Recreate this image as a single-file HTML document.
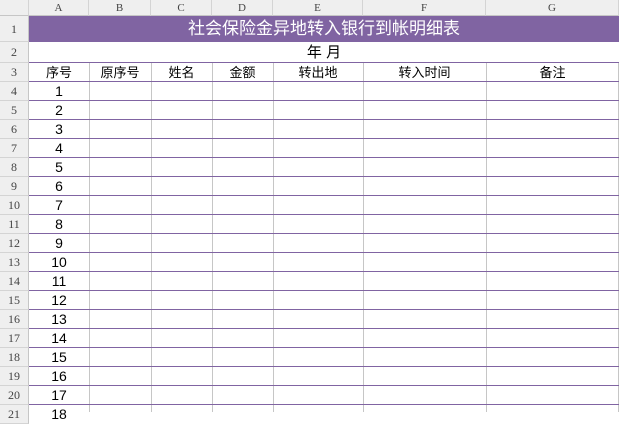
<!DOCTYPE html>
<html><head><meta charset="utf-8"><style>
*{margin:0;padding:0;box-sizing:border-box}
body{width:619px;height:412px;overflow:hidden;background:#fff;position:relative;font-family:"Liberation Sans","Noto Sans CJK SC",sans-serif}
.a{position:absolute}
.ch{top:0;height:16px;background:#efefef;border-right:1px solid #d4d4d4;border-bottom:1px solid #c6c6c6;font:11px "Liberation Serif","Noto Serif CJK SC",serif;color:#444;text-align:center;line-height:16px}
.rh{left:0;width:29px;background:#efefef;border-bottom:1px solid #d4d4d4;border-right:1px solid #c6c6c6;font:12px "Liberation Serif",serif;color:#444;text-align:center}
.v{top:63px;width:1px;height:349px;background:#c6c6c6}
.h{left:29px;width:590px;height:1px;background:#8064a2}
.t{font-size:13px;color:#000;text-align:center;line-height:19px}
.n{left:29px;width:60px;text-align:center;font-size:14px;color:#000;line-height:19px}
</style></head><body>
<div class="a ch" style="left:0;width:29px"></div>
<div class="a ch" style="left:29px;width:60px">A</div>
<div class="a ch" style="left:89px;width:62px">B</div>
<div class="a ch" style="left:151px;width:61px">C</div>
<div class="a ch" style="left:212px;width:61px">D</div>
<div class="a ch" style="left:273px;width:90px">E</div>
<div class="a ch" style="left:363px;width:123px">F</div>
<div class="a ch" style="left:486px;width:133px">G</div>

<div class="a" style="left:29px;top:16px;width:590px;height:26px;background:#8064a2;color:#fff;font-size:17px;text-align:center;line-height:26px">社会保险金异地转入银行到帐明细表</div>
<div class="a" style="left:29px;top:42px;width:590px;height:21px;font-size:15px;text-align:center;line-height:22px">年 月</div>
<div class="a h" style="top:62px"></div>

<div class="a v" style="left:89px"></div>
<div class="a v" style="left:151px"></div>
<div class="a v" style="left:212px"></div>
<div class="a v" style="left:273px"></div>
<div class="a v" style="left:363px"></div>
<div class="a v" style="left:486px"></div>
<div class="a v" style="left:618px"></div>

<div class="a t" style="left:29px;top:63px;width:60px">序号</div>
<div class="a t" style="left:89px;top:63px;width:62px">原序号</div>
<div class="a t" style="left:151px;top:63px;width:61px">姓名</div>
<div class="a t" style="left:212px;top:63px;width:61px">金额</div>
<div class="a t" style="left:273px;top:63px;width:90px">转出地</div>
<div class="a t" style="left:363px;top:63px;width:123px">转入时间</div>
<div class="a t" style="left:486px;top:63px;width:133px">备注</div>

<div class="a rh" style="top:16px;height:26px;line-height:26px">1</div>
<div class="a rh" style="top:42px;height:21px;line-height:21px">2</div>
<div class="a rh" style="top:63px;height:19px;line-height:19px">3</div>
<div class="a rh" style="top:82px;height:19px;line-height:19px">4</div>
<div class="a rh" style="top:101px;height:19px;line-height:19px">5</div>
<div class="a rh" style="top:120px;height:19px;line-height:19px">6</div>
<div class="a rh" style="top:139px;height:19px;line-height:19px">7</div>
<div class="a rh" style="top:158px;height:19px;line-height:19px">8</div>
<div class="a rh" style="top:177px;height:19px;line-height:19px">9</div>
<div class="a rh" style="top:196px;height:19px;line-height:19px">10</div>
<div class="a rh" style="top:215px;height:19px;line-height:19px">11</div>
<div class="a rh" style="top:234px;height:19px;line-height:19px">12</div>
<div class="a rh" style="top:253px;height:19px;line-height:19px">13</div>
<div class="a rh" style="top:272px;height:19px;line-height:19px">14</div>
<div class="a rh" style="top:291px;height:19px;line-height:19px">15</div>
<div class="a rh" style="top:310px;height:19px;line-height:19px">16</div>
<div class="a rh" style="top:329px;height:19px;line-height:19px">17</div>
<div class="a rh" style="top:348px;height:19px;line-height:19px">18</div>
<div class="a rh" style="top:367px;height:19px;line-height:19px">19</div>
<div class="a rh" style="top:386px;height:19px;line-height:19px">20</div>
<div class="a rh" style="top:405px;height:19px;line-height:19px">21</div>

<div class="a h" style="top:81px"></div>
<div class="a h" style="top:100px"></div>
<div class="a h" style="top:119px"></div>
<div class="a h" style="top:138px"></div>
<div class="a h" style="top:157px"></div>
<div class="a h" style="top:176px"></div>
<div class="a h" style="top:195px"></div>
<div class="a h" style="top:214px"></div>
<div class="a h" style="top:233px"></div>
<div class="a h" style="top:252px"></div>
<div class="a h" style="top:271px"></div>
<div class="a h" style="top:290px"></div>
<div class="a h" style="top:309px"></div>
<div class="a h" style="top:328px"></div>
<div class="a h" style="top:347px"></div>
<div class="a h" style="top:366px"></div>
<div class="a h" style="top:385px"></div>
<div class="a h" style="top:404px"></div>

<div class="a n" style="top:82px">1</div>
<div class="a n" style="top:101px">2</div>
<div class="a n" style="top:120px">3</div>
<div class="a n" style="top:139px">4</div>
<div class="a n" style="top:158px">5</div>
<div class="a n" style="top:177px">6</div>
<div class="a n" style="top:196px">7</div>
<div class="a n" style="top:215px">8</div>
<div class="a n" style="top:234px">9</div>
<div class="a n" style="top:253px">10</div>
<div class="a n" style="top:272px">11</div>
<div class="a n" style="top:291px">12</div>
<div class="a n" style="top:310px">13</div>
<div class="a n" style="top:329px">14</div>
<div class="a n" style="top:348px">15</div>
<div class="a n" style="top:367px">16</div>
<div class="a n" style="top:386px">17</div>
<div class="a n" style="top:405px">18</div>
</body></html>
